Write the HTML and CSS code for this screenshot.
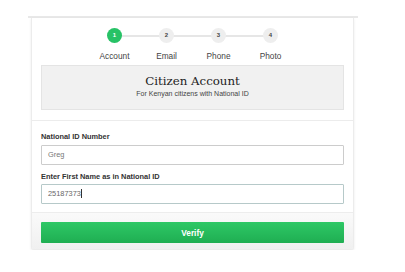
FILE: index.html
```html
<!DOCTYPE html>
<html lang="en">
<head>
  <meta charset="UTF-8" />
  <title>Citizen Account</title>
  <link rel="stylesheet" href="styles.css">
</head>
<body>
  <div class="frame">
    <div class="card">
      <div class="card-head">
        <div class="steps">
          <div class="step active"><span class="dot">1</span><span class="step-label">Account</span></div>
          <div class="step"><span class="dot">2</span><span class="step-label">Email</span></div>
          <div class="step"><span class="dot">3</span><span class="step-label">Phone</span></div>
          <div class="step"><span class="dot">4</span><span class="step-label">Photo</span></div>
        </div>
        <div class="intro">
          <div class="intro-title">Citizen Account</div>
          <div class="intro-sub">For Kenyan citizens with National ID</div>
        </div>
      </div>
      <div class="card-body">
        <label class="field-label">National ID Number</label>
        <div class="input">Greg</div>
        <label class="field-label">Enter First Name as in National ID</label>
        <div class="input focused">25187373<span class="caret"></span></div>
      </div>
      <div class="card-foot">
        <button class="verify">Verify</button>
      </div>
    </div>
  </div>
</body>
</html>
```

FILE: styles.css
```css
body { margin: 0; padding-top: 16px; background: #fff; font-family: 'Liberation Sans', Arial, sans-serif; color: #333; }
.frame { width: 330px; margin-left: 28px; border-top: 2px solid #e8e8e8; }
.card { margin: 0 4px 0 3px; border: 1px solid #ececec; border-top: none; border-radius: 0 0 3px 3px; box-shadow: 0 1px 3px rgba(0,0,0,0.08); background: #fff; }
.card-head { padding: 10px 9px 10px; border-bottom: 1px solid #ececec; }
.steps { display: flex; justify-content: center; }
.step { width: 52px; display: flex; flex-direction: column; align-items: center; position: relative; }
.step + .step::before { content: ""; position: absolute; top: 7px; left: -26px; width: 52px; height: 2px; background: #e6e6e6; }
.dot { position: relative; z-index: 1; width: 15px; height: 15px; border-radius: 50%; background: #eeeeee; color: #444; font-size: 6px; font-weight: bold; line-height: 15px; text-align: center; }
.step.active .dot { background: #27c266; color: #fff; }
.step-label { margin-top: 8px; font-size: 8.3px; line-height: 10px; color: #444; }
.intro { margin-top: 4px; height: 43px; background: #f1f1f1; border: 1px solid #e4e4e4; text-align: center; }
.intro-title { margin-top: 8px; font-family: 'DejaVu Serif', serif; font-size: 11.8px; color: #222; }
.intro-sub { margin-top: 2px; font-size: 7px; color: #444; }
.card-body { padding: 11px 9px 8px; }
.field-label { display: block; font-size: 7.4px; line-height: 9px; font-weight: bold; color: #333; margin-bottom: 4px; }
.field-label + .input + .field-label { margin-bottom: 3px; }
.input { height: 18px; border: 1px solid #cccccc; border-radius: 1px; padding: 0 6px; font-size: 7.4px; line-height: 18px; color: #777; margin-bottom: 7px; }
.input.focused { border-color: #b6c9c9; color: #666; margin-bottom: 0; }
.caret { display: inline-block; width: 1px; height: 9px; background: #333; vertical-align: -2px; }
.card-foot { padding: 9px 9px 6px; background: linear-gradient(#fafafa, #f0f0f0); border-top: 1px solid #ededed; }
.verify { display: block; width: 100%; height: 21px; border: none; border-radius: 1px; background: linear-gradient(#2ec866, #1fae52); color: #fff; font-family: 'Liberation Sans', Arial, sans-serif; font-size: 8.3px; font-weight: bold; cursor: pointer; }
```
